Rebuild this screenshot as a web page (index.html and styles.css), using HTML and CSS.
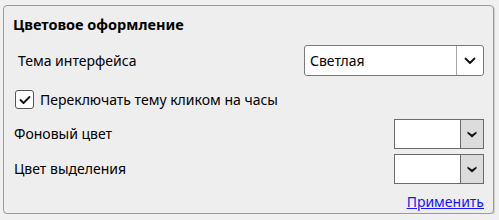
FILE: index.html
```html
<!DOCTYPE html>
<html lang="ru">
<head>
<meta charset="utf-8">
<link rel="stylesheet" href="styles.css">
</head>
<body>
<div class="panel">
  <div class="title">Цветовое оформление</div>
  <div class="row theme-row">
    <span class="label theme-label">Тема интерфейса</span>
    <div class="select">
      <span class="select-text">Светлая</span>
      <span class="select-btn">
        <svg width="12" height="8" viewBox="0 0 12 8"><path d="M1.5 1.5 L6 6 L10.5 1.5" fill="none" stroke="#111" stroke-width="1.8" stroke-linecap="round" stroke-linejoin="round"/></svg>
      </span>
    </div>
  </div>
  <div class="check-row">
    <span class="checkbox">
      <svg width="12" height="10" viewBox="0 0 12 10"><path d="M1.5 5 L4.5 8 L10.5 2" fill="none" stroke="#111" stroke-width="1.8" stroke-linecap="round" stroke-linejoin="round"/></svg>
    </span>
    <span class="label">Переключать тему кликом на часы</span>
  </div>
  <div class="row color-row first">
    <span class="label color-label">Фоновый цвет</span>
    <div class="color-box">
      <span class="swatch"></span>
      <span class="color-btn">
        <svg width="10" height="7" viewBox="0 0 10 7"><path d="M0.5 0.5 L5 3.5 L9.5 0.5 L9.5 2.5 L5 6.5 L0.5 2.5 Z" fill="#111"/></svg>
      </span>
    </div>
  </div>
  <div class="row color-row second">
    <span class="label color-label">Цвет выделения</span>
    <div class="color-box">
      <span class="swatch"></span>
      <span class="color-btn">
        <svg width="10" height="7" viewBox="0 0 10 7"><path d="M0.5 0.5 L5 3.5 L9.5 0.5 L9.5 2.5 L5 6.5 L0.5 2.5 Z" fill="#111"/></svg>
      </span>
    </div>
  </div>
  <div class="link-row"><a class="apply" href="#">Применить</a></div>
</div>
</body>
</html>
```
FILE: styles.css
```css
html, body {
  margin: 0;
  padding: 0;
  background: #f0f0f0;
}
body {
  font-family: "Noto Sans", "Open Sans", sans-serif;
  font-size: 14px;
  color: #000;
}
.panel {
  box-sizing: border-box;
  margin: 5px 0 0 3px;
  width: 491px;
  height: 209px;
  border: 1px solid #9a9a9a;
  border-radius: 4px;
  box-shadow: 1px 1px 0 #cfcfcf;
  background: #eeeeee;
  padding: 0 9px 0 0;
  display: flex;
  flex-direction: column;
}
.title {
  font-weight: bold;
  font-size: 14.5px;
  margin: 8px 0 0 9px;
  height: 20px;
  line-height: 20px;
}
.row {
  display: flex;
  align-items: center;
  justify-content: space-between;
}
.label {
  line-height: 18px;
}
.theme-row {
  margin-top: 11px;
  height: 31px;
}
.theme-label {
  margin-left: 14px;
}
.select {
  box-sizing: border-box;
  width: 180px;
  height: 31px;
  border: 1px solid #7a7a7a;
  border-radius: 3px;
  background: #fff;
  display: flex;
}
.select-text {
  flex: 1;
  padding-left: 5px;
  line-height: 29px;
}
.select-btn {
  width: 26px;
  border-left: 1px solid #a8a8a8;
  display: flex;
  align-items: center;
  justify-content: center;
}
.check-row {
  margin-top: 14px;
  height: 19px;
  display: flex;
  align-items: center;
}
.checkbox {
  box-sizing: border-box;
  width: 19px;
  height: 19px;
  margin-left: 11px;
  margin-right: 6px;
  border: 1px solid #555;
  border-radius: 3px;
  background: #fff;
  display: flex;
  align-items: center;
  justify-content: center;
}
.color-row {
  height: 30px;
}
.color-row.first {
  margin-top: 10px;
}
.color-row.second {
  margin-top: 5px;
}
.color-label {
  margin-left: 10px;
}
.color-box {
  box-sizing: border-box;
  width: 90px;
  height: 30px;
  border: 1px solid #6b6b6b;
  display: flex;
  background: #fff;
}
.swatch {
  flex: 1;
  background: #fff;
}
.color-btn {
  width: 22px;
  background: #dcdcdc;
  border-left: 1px solid #6b6b6b;
  display: flex;
  align-items: center;
  justify-content: center;
}
.link-row {
  margin-top: 8px;
  display: flex;
  justify-content: flex-end;
}
.apply {
  color: #1414ff;
  text-decoration: underline;
  line-height: 19px;
}
```
